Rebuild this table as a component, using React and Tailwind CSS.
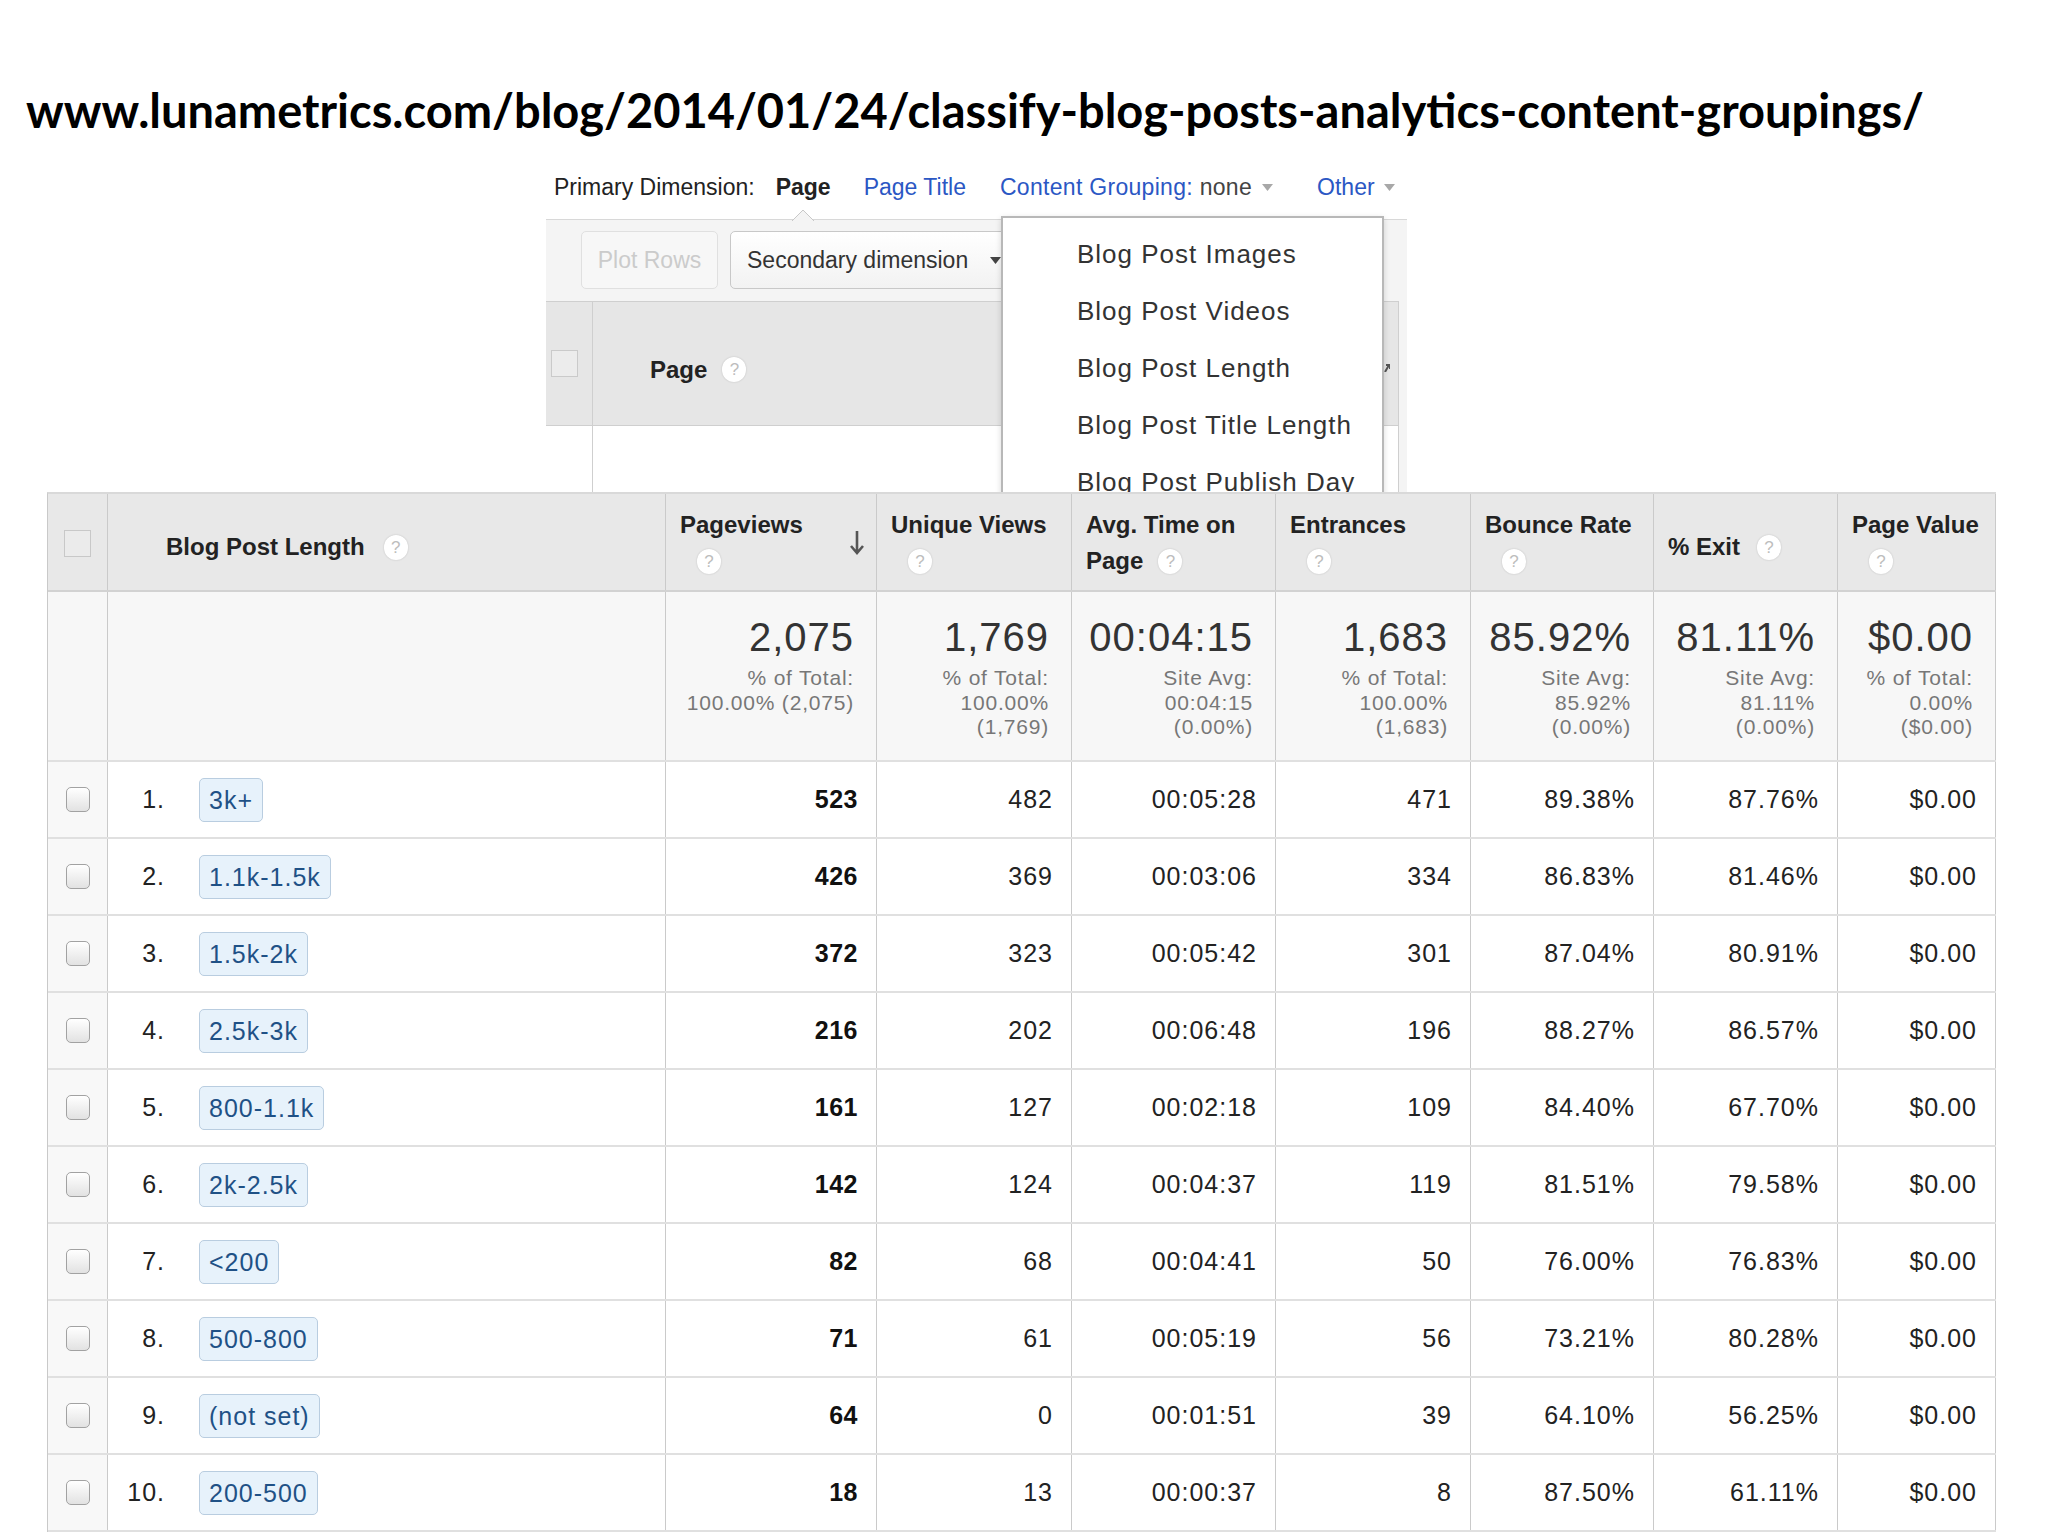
import React from 'react';

const ga = "font-['Liberation_Sans',Arial,sans-serif]";

const metrics = [
  { title: 'Pageviews', w: 'w-[211px]', sort: true, total: '2,075', sub: ['% of Total:', '100.00% (2,075)'] },
  { title: 'Unique Views', w: 'w-[195px]', total: '1,769', sub: ['% of Total:', '100.00%', '(1,769)'] },
  { title: 'Avg. Time on', second: 'Page', w: 'w-[204px]', total: '00:04:15', sub: ['Site Avg:', '00:04:15', '(0.00%)'] },
  { title: 'Entrances', w: 'w-[195px]', total: '1,683', sub: ['% of Total:', '100.00%', '(1,683)'] },
  { title: 'Bounce Rate', w: 'w-[183px]', total: '85.92%', sub: ['Site Avg:', '85.92%', '(0.00%)'] },
  { title: '% Exit', inline: true, w: 'w-[184px]', total: '81.11%', sub: ['Site Avg:', '81.11%', '(0.00%)'] },
  { title: 'Page Value', w: 'w-[158px]', total: '$0.00', sub: ['% of Total:', '0.00%', '($0.00)'] },
];

const rows = [
  ['3k+', '523', '482', '00:05:28', '471', '89.38%', '87.76%', '$0.00'],
  ['1.1k-1.5k', '426', '369', '00:03:06', '334', '86.83%', '81.46%', '$0.00'],
  ['1.5k-2k', '372', '323', '00:05:42', '301', '87.04%', '80.91%', '$0.00'],
  ['2.5k-3k', '216', '202', '00:06:48', '196', '88.27%', '86.57%', '$0.00'],
  ['800-1.1k', '161', '127', '00:02:18', '109', '84.40%', '67.70%', '$0.00'],
  ['2k-2.5k', '142', '124', '00:04:37', '119', '81.51%', '79.58%', '$0.00'],
  ['<200', '82', '68', '00:04:41', '50', '76.00%', '76.83%', '$0.00'],
  ['500-800', '71', '61', '00:05:19', '56', '73.21%', '80.28%', '$0.00'],
  ['(not set)', '64', '0', '00:01:51', '39', '64.10%', '56.25%', '$0.00'],
  ['200-500', '18', '13', '00:00:37', '8', '87.50%', '61.11%', '$0.00'],
];

const menuItems = ['Blog Post Images', 'Blog Post Videos', 'Blog Post Length', 'Blog Post Title Length', 'Blog Post Publish Day'];

function Help({ className = '' }) {
  return (
    <span className={`inline-flex items-center justify-center w-[24px] h-[25px] rounded-full bg-white shadow-[0_0_2px_rgba(0,0,0,0.18)] text-[17px] leading-none font-normal text-[#bdbdbd] ${className}`}>
      ?
    </span>
  );
}

function Caret({ color = '#a8a8a8', className = '' }) {
  return (
    <svg width="11" height="7" viewBox="0 0 11 7" className={className}>
      <path d="M0 0h11L5.5 7z" fill={color} />
    </svg>
  );
}

function SortArrow() {
  return (
    <svg width="16" height="26" viewBox="0 0 16 26">
      <path d="M8 1v22M2 16l6 7 6-7" stroke="#555" strokeWidth="2.6" fill="none" />
    </svg>
  );
}

function TopPanel() {
  return (
    <div className={`relative ml-[546px] w-[861px] h-[354px] overflow-hidden ${ga}`}>
      {/* primary dimension bar */}
      <div className="mt-[35px] h-[28px] flex items-center pl-[8px] text-[23px] leading-[28px] whitespace-nowrap">
        <span className="text-[#222]">Primary Dimension:</span>
        <span className="ml-[21px] font-bold text-[#222]">Page</span>
        <span className="ml-[33px] text-[#2b57c4]">Page Title</span>
        <span className="ml-[34px] tracking-[0.3px] text-[#2b57c4]">
          Content Grouping: <span className="text-[#444]">none</span>
        </span>
        <Caret className="ml-[10px]" />
        <span className="ml-[44px] text-[#2b57c4]">Other</span>
        <Caret className="ml-[9px]" />
      </div>

      <div className="relative mt-[18px] h-[273px] border-t border-[#d8d8d8] bg-[#f4f4f4]">
        <svg width="22" height="12" viewBox="0 0 22 12" className="absolute -top-[11px] left-[246px]">
          <path d="M0 12L11 1l11 11" fill="#f4f4f4" stroke="#c8c8c8" strokeWidth="1" />
        </svg>

        <div className="flex pt-[11px] pl-[35px] gap-[12px] text-[23px]">
          <div className="w-[137px] h-[58px] rounded-[5px] border border-[#e0e0e0] bg-[#f7f7f7] text-[#cbcbcb] flex items-center justify-center">
            Plot Rows
          </div>
          <div className="w-[320px] h-[58px] rounded-[5px] border border-[#c8c8c8] bg-gradient-to-b from-white to-[#f2f2f2] pl-[16px] flex items-center text-[#333] whitespace-nowrap">
            Secondary dimension
            <Caret color="#444" className="ml-[22px]" />
          </div>
        </div>

        <div className="mt-[12px] w-[853px] h-[125px] flex border-y border-r border-[#cfcfcf] bg-[#e6e6e6]">
          <div className="w-[47px] border-r border-[#cfcfcf] flex items-center pl-[5px]">
            <div className="w-[27px] h-[27px] border border-[#cacaca] bg-[#ececec]" />
          </div>
          <div className="flex-1 flex items-center pt-[12px] pl-[57px] text-[24px] font-bold text-[#222]">
            Page
            <Help className="ml-[15px]" />
          </div>
          <div className="flex items-start pt-[62px] pr-[8px]">
            <svg width="6" height="8" viewBox="0 0 6 8">
              <path d="M1 8L5 1M2 1h4v4" stroke="#555" strokeWidth="2" fill="none" />
            </svg>
          </div>
        </div>
        <div className="w-[853px] h-[70px] flex border-r border-[#cfcfcf] bg-white">
          <div className="w-[47px] border-r border-[#cfcfcf]" />
        </div>
      </div>

      {/* content grouping menu */}
      <div className="absolute left-[455px] top-[78px] w-[383px] h-[320px] bg-white border-2 border-[#b8b8b8] shadow-[0_2px_6px_rgba(0,0,0,0.15)] pt-[8px]">
        {menuItems.map((item) => (
          <div key={item} className="h-[57px] leading-[57px] pl-[74px] text-[26px] tracking-[1px] text-[#333] whitespace-nowrap">
            {item}
          </div>
        ))}
      </div>
    </div>
  );
}

function HeaderCell({ m }) {
  if (m.inline) {
    return (
      <div className={`${m.w} border-r border-[#cacaca] flex items-center pt-[10px] pl-[14px] whitespace-nowrap`}>
        {m.title}
        <Help className="ml-[17px]" />
      </div>
    );
  }
  return (
    <div className={`${m.w} border-r border-[#cacaca] flex justify-between pl-[14px] pt-[13px] pr-[11px] whitespace-nowrap`}>
      <div>
        <div className="h-[36px] leading-[36px]">{m.title}</div>
        <div className="h-[36px] flex items-center">
          {m.second && <span className="leading-[36px]">{m.second}</span>}
          <Help className={m.second ? 'ml-[15px]' : 'ml-[17px]'} />
        </div>
      </div>
      {m.sort && (
        <div className="flex items-center pb-[12px]">
          <SortArrow />
        </div>
      )}
    </div>
  );
}

function MainTable() {
  return (
    <div className={`ml-[47px] w-[1949px] border-t-2 border-t-[#d9d9d9] border-l border-l-[#c9c9c9] bg-white ${ga}`}>
      {/* header */}
      <div className="flex h-[98px] bg-[#e8e8e8] border-b-2 border-[#d2d2d2] text-[24px] font-bold text-[#222]">
        <div className="w-[60px] border-r border-[#cacaca] flex items-center justify-center pt-[2px]">
          <div className="w-[27px] h-[27px] border border-[#c8c8c8] bg-[#ebebeb]" />
        </div>
        <div className="w-[558px] border-r border-[#cacaca] flex items-center pt-[10px] pl-[58px] whitespace-nowrap">
          Blog Post Length
          <Help className="ml-[19px]" />
        </div>
        {metrics.map((m) => (
          <HeaderCell key={m.title} m={m} />
        ))}
      </div>

      {/* totals */}
      <div className="flex h-[170px] bg-[#f7f7f7] border-b-2 border-[#e0e0e0]">
        <div className="w-[60px] border-r border-[#cacaca]" />
        <div className="w-[558px] border-r border-[#cacaca]" />
        {metrics.map((m) => (
          <div key={m.title} className={`${m.w} border-r border-[#cacaca] flex flex-col items-end pt-[23px] pr-[22px] whitespace-nowrap`}>
            <div className="text-[40px] leading-[44px] tracking-[1px] text-[#333]">{m.total}</div>
            <div className="mt-[7px] text-right text-[21px] leading-[24.5px] tracking-[0.8px] text-[#777]">
              {m.sub.map((s) => (
                <div key={s}>{s}</div>
              ))}
            </div>
          </div>
        ))}
      </div>

      {/* rows */}
      {rows.map((r, i) => (
        <div key={r[0]} className="flex h-[77px] border-b-2 border-[#e0e0e0] text-[25px] tracking-[1px] text-[#222]">
          <div className="w-[60px] border-r border-[#cacaca] bg-[#f8f8f8] flex items-center justify-center">
            <div className="w-[24px] h-[25px] rounded-[5px] border border-[#a2a2a2] bg-gradient-to-b from-white to-[#e2e2e2]" />
          </div>
          <div className="w-[558px] border-r border-[#cacaca] flex items-center">
            <span className="w-[57px] text-right">{i + 1}.</span>
            <span className="ml-[34px] h-[44px] leading-[42px] px-[9px] rounded-[5px] border border-[#b9cde0] bg-[#e7f2fb] text-[#1f5186] whitespace-nowrap">
              {r[0]}
            </span>
          </div>
          {metrics.map((m, j) => (
            <div key={m.title} className={`${m.w} border-r border-[#cacaca] flex items-center justify-end pr-[18px] whitespace-nowrap ${j === 0 ? 'font-bold text-[#111] tracking-[0.5px]' : ''}`}>
              {r[j + 1]}
            </div>
          ))}
        </div>
      ))}
    </div>
  );
}

export default function App() {
  return (
    <div className="w-[2048px] h-[1536px] bg-white overflow-hidden">
      <div className="pl-[26px] pt-[82px] h-[138px] font-['Lato',sans-serif] font-bold text-[47px] leading-[56px] tracking-[0px] text-black whitespace-nowrap">
        www.lunametrics.com/blog/2014/01/24/classify-blog-posts-analytics-content-groupings/
      </div>
      <TopPanel />
      <MainTable />
    </div>
  );
}
